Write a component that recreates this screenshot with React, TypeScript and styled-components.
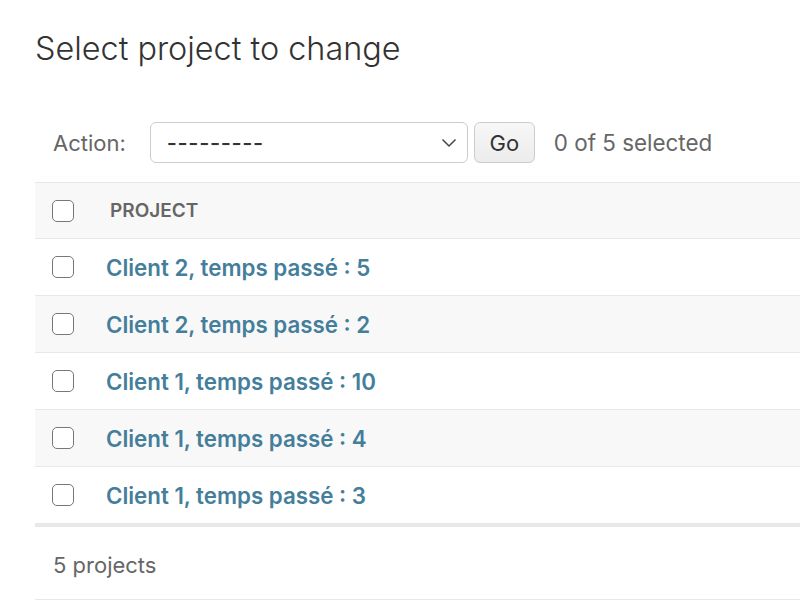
import styled, { createGlobalStyle } from 'styled-components';

const GlobalStyle = createGlobalStyle`
  html, body {
    margin: 0;
    padding: 0;
    background: #fff;
  }
  body {
    font-family: Inter, "Liberation Sans", sans-serif;
    color: #333;
    overflow: hidden;
  }
`;

const Page = styled.div`
  width: 800px;
  height: 616px;
  overflow: hidden;
  padding-left: 35px;
  box-sizing: border-box;
`;

const Title = styled.h1`
  margin: 0;
  padding: 29px 0 0;
  height: 100px;
  box-sizing: border-box;
  font-size: 32.4px;
  line-height: 40px;
  font-weight: 300;
  color: #333;
  white-space: nowrap;
`;

const ActionsBar = styled.div`
  display: flex;
  align-items: center;
  height: 82px;
  padding: 3px 0 0 18px;
  box-sizing: border-box;
`;

const Label = styled.span`
  font-size: 22px;
  color: #666;
  margin-right: 24px;
`;

const SelectBox = styled.div`
  position: relative;
  display: flex;
  align-items: center;
  width: 318px;
  height: 41px;
  box-sizing: border-box;
  border: 1px solid #ccc;
  border-radius: 6px;
  padding-left: 16px;
  font-size: 22px;
  font-weight: 500;
  color: #333;
  letter-spacing: 0.6px;
`;

const Chevron = styled.svg`
  position: absolute;
  right: 10px;
  top: 15px;
`;

const GoButton = styled.button`
  margin-left: 6px;
  width: 61px;
  height: 41px;
  border: 1px solid #ccc;
  border-radius: 6px;
  background: linear-gradient(#f7f7f7, #ececec);
  font-family: inherit;
  font-size: 22px;
  color: #333;
  padding: 0;
`;

const Counter = styled.span`
  margin-left: 19px;
  font-size: 22.4px;
  color: #666;
`;

const Table = styled.div`
  width: 800px;
  border-top: 1px solid #e8e8e8;
`;

const Row = styled.div<{ $shaded?: boolean; $head?: boolean }>`
  display: flex;
  align-items: center;
  height: ${(p) => (p.$head ? 56 : 57)}px;
  box-sizing: border-box;
  border-bottom: 1px solid #e8e8e8;
  background: ${(p) => (p.$shaded || p.$head ? '#f8f8f8' : '#fff')};
  padding-left: 17px;
`;

const Check = styled.span`
  display: block;
  width: 22px;
  height: 22px;
  box-sizing: border-box;
  border: 1.5px solid #777;
  border-radius: 5px;
  background: #fff;
  flex-shrink: 0;
`;

const HeadText = styled.span`
  margin-left: 36px;
  font-size: 19px;
  font-weight: 600;
  color: #666;
  text-transform: uppercase;
`;

const Link = styled.a`
  margin-left: 32px;
  font-size: 22.3px;
  font-weight: 600;
  color: #447e9b;
  text-decoration: none;
  white-space: nowrap;
`;

const Footer = styled.div`
  width: 800px;
  height: 76px;
  box-sizing: border-box;
  border-top: 3px solid #e8e8e8;
  border-bottom: 1px solid #e8e8e8;
  display: flex;
  align-items: center;
  padding: 3px 0 0 18px;
  font-size: 22px;
  color: #666;
`;

const projects = [
  'Client 2, temps passé : 5',
  'Client 2, temps passé : 2',
  'Client 1, temps passé : 10',
  'Client 1, temps passé : 4',
  'Client 1, temps passé : 3',
];

export default function App() {
  return (
    <Page>
      <GlobalStyle />
      <Title>Select project to change</Title>
      <ActionsBar>
        <Label>Action:</Label>
        <SelectBox>
          ---------
          <Chevron width="16" height="10" viewBox="0 0 16 10">
            <polyline points="1.5,1.5 8,8 14.5,1.5" fill="none" stroke="#444" strokeWidth="1.5" />
          </Chevron>
        </SelectBox>
        <GoButton>Go</GoButton>
        <Counter>0 of 5 selected</Counter>
      </ActionsBar>
      <Table>
        <Row $head>
          <Check />
          <HeadText>Project</HeadText>
        </Row>
        {projects.map((name, i) => (
          <Row key={name} $shaded={i % 2 === 1}>
            <Check />
            <Link href="#">{name}</Link>
          </Row>
        ))}
      </Table>
      <Footer>5 projects</Footer>
    </Page>
  );
}
